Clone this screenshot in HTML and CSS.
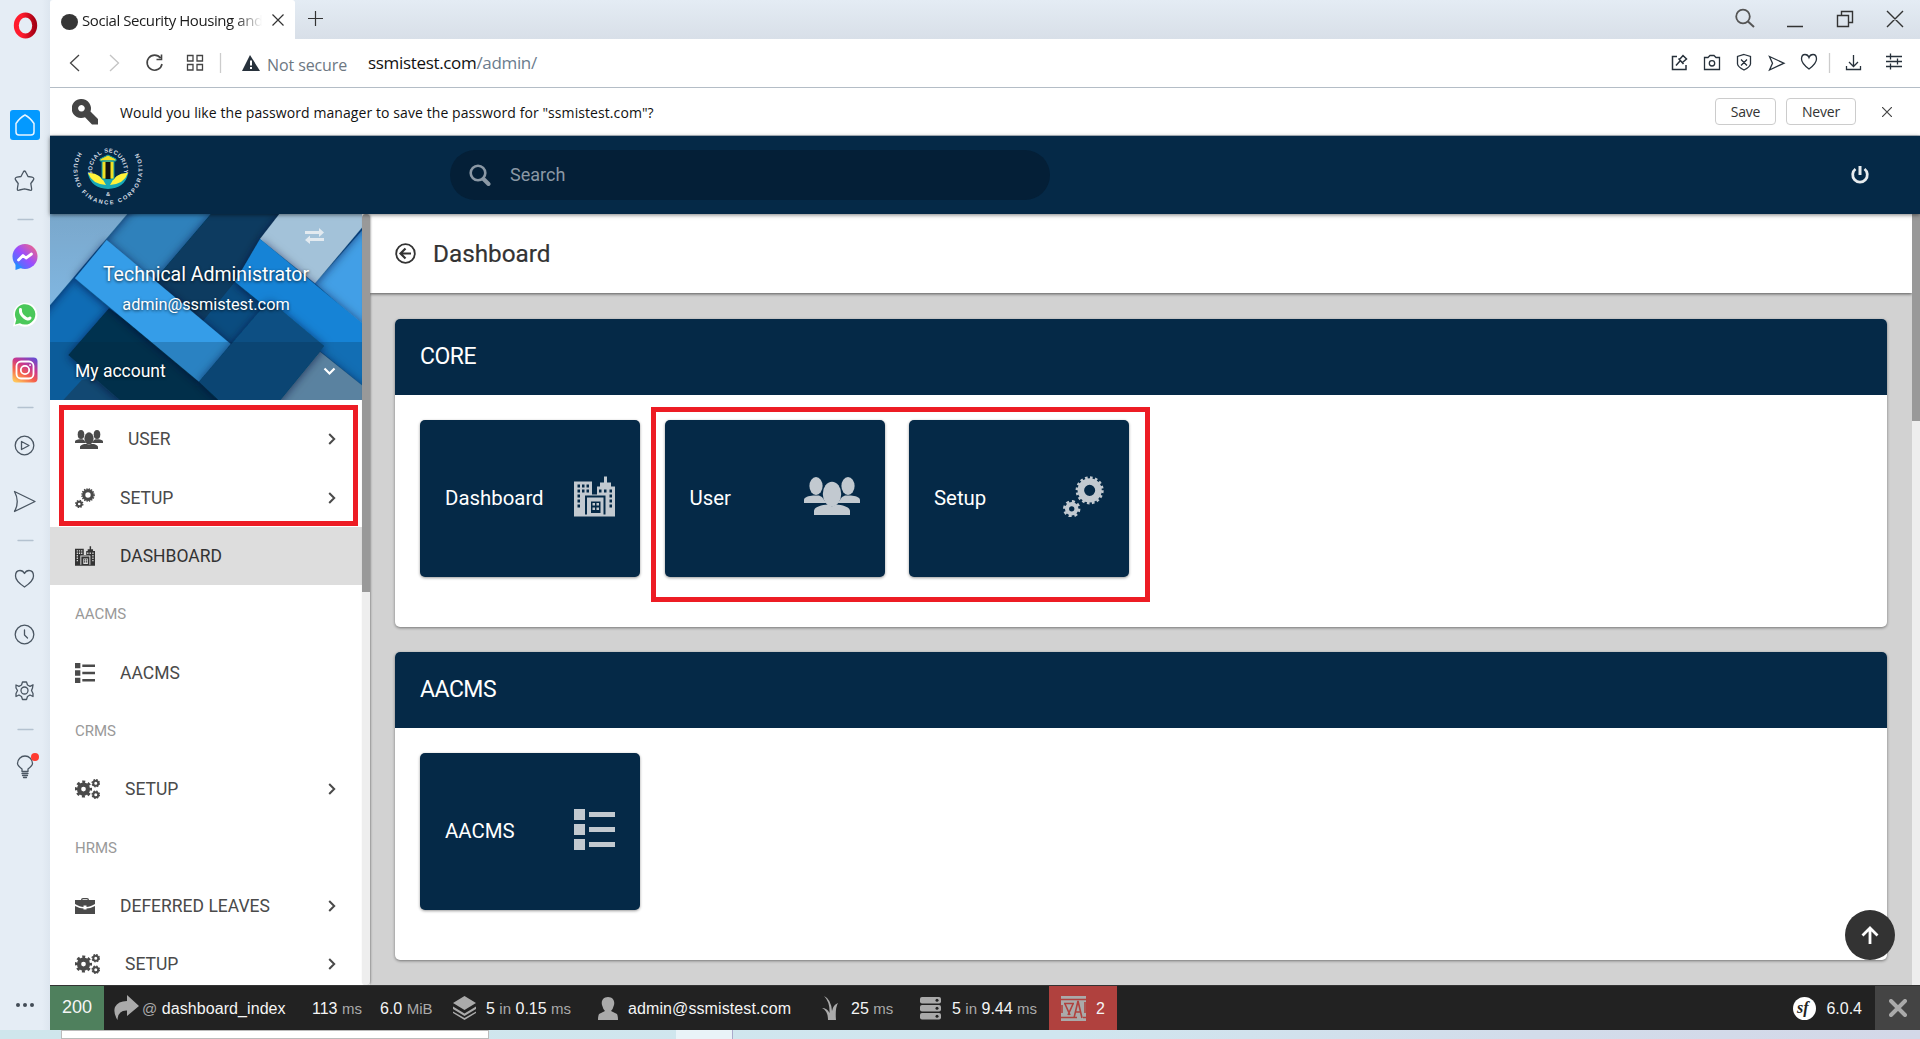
FILE: index.html
```html
<!DOCTYPE html>
<html lang="en">
<head>
<meta charset="utf-8">
<title>Social Security Housing and Finance Corporation</title>
<link rel="stylesheet" href="styles.css">
</head>
<body>
<svg class="defs" width="0" height="0">
  <defs>
    <symbol id="gears" viewBox="0 0 40 40">
      <circle cx="26" cy="14" r="8.6" fill="none" stroke="currentColor" stroke-width="6.4"/>
      <circle cx="26" cy="14" r="12.2" fill="none" stroke="currentColor" stroke-width="3" stroke-dasharray="2.5 2.29"/>
      <circle cx="8.5" cy="32" r="4.6" fill="none" stroke="currentColor" stroke-width="4"/>
      <circle cx="8.5" cy="32" r="7.2" fill="none" stroke="currentColor" stroke-width="2.6" stroke-dasharray="2.9 2.75"/>
    </symbol>
    <symbol id="cogs" viewBox="0 0 50 40">
      <circle cx="17" cy="20" r="9" fill="none" stroke="currentColor" stroke-width="8.5"/>
      <circle cx="17" cy="20" r="14.6" fill="none" stroke="currentColor" stroke-width="5" stroke-dasharray="6 5.47" stroke-dashoffset="3"/>
      <circle cx="41.5" cy="8.500" r="5" fill="none" stroke="currentColor" stroke-width="4"/>
      <circle cx="41.500" cy="8.500" r="7.300" fill="none" stroke="currentColor" stroke-width="2.600" stroke-dasharray="3.200 2.530"/>
      <circle cx="41.500" cy="31.500" r="5" fill="none" stroke="currentColor" stroke-width="4"/>
      <circle cx="41.500" cy="31.500" r="7.300" fill="none" stroke="currentColor" stroke-width="2.600" stroke-dasharray="3.200 2.530"/>
    </symbol>
    <symbol id="users" viewBox="0 0 56 38">
      <g fill="currentColor">
        <ellipse cx="12" cy="9" rx="6.600" ry="9"/><ellipse cx="44" cy="9" rx="6.600" ry="9"/>
        <path d="M0 26V23C0 20 5 19 9 18.500H15L18 20Q20 23 22 25.500V26ZM56 26V23C56 20 51 19 47 18.500H41L38 20Q36 23 34 25.500V26Z"/>
        <ellipse cx="28" cy="17" rx="9.200" ry="12.300"/>
        <path d="M10 38V34C10 30 17 28 24 27.500Q28 31 32 27.500C39 28 46 30 46 34V38Z"/>
      </g>
    </symbol>
    <symbol id="city" viewBox="0 0 41 40">
      <path fill="currentColor" fill-rule="evenodd" d="M0 5H18V18H23V10H26V6H30V0H33V6H37V10H41V40H0ZM3.500 8v3h2.500V8zM8 8v3h2.500V8zM12.500 8v3H15V8zM3.500 13v3h2.500v-3zM8 13v3h2.500v-3zM12.500 13v3H15v-3zM3.500 18v3h2.500v-3zM3.500 23v3h2.500v-3zM3.500 28v3h2.500v-3zM25 13v3h2.500v-3zM30 13v3h2.500v-3zM35.500 13v3H38v-3zM35.500 18v3H38v-3zM35.500 23v3H38v-3zM35.500 28v3H38v-3zM11 38V19H31.500V38H29.500V21H13V38ZM17 25v11.500h9.500V25z"/>
      <path fill="currentColor" d="M18.500 26.500h2.500v2.500h-2.500zM22.500 26.500H25v2.500h-2.500zM18.500 31h2.500v2.500h-2.500zM22.500 31H25v2.500h-2.500z"/>
    </symbol>
    <symbol id="list" viewBox="0 0 41 41">
      <path fill="currentColor" d="M0 0h11v11H0zM0 15h11v11H0zM0 30h11v11H0zM15 3h26v5H15zM15 18h26v5H15zM15 33h26v5H15z"/>
    </symbol>
    <symbol id="chev" viewBox="0 0 8 12"><path d="M1.200 1 6.200 6 1.200 11" fill="none" stroke="currentColor" stroke-width="2"/></symbol>
  </defs>
</svg>

<div class="screen">
  <aside class="rail">
    <svg width="50" height="1030" fill="none" stroke="#4a5662" stroke-width="1.300" stroke-linejoin="round" stroke-linecap="round">
      <defs>
        <linearGradient id="op" x1="0" x2="1"><stop offset="0.300" stop-color="#ff1b2d"/><stop offset="1" stop-color="#a70014"/></linearGradient>
        <linearGradient id="ms" x1="0" y1="1" x2="1" y2="0"><stop offset="0" stop-color="#1a8cff"/><stop offset="0.500" stop-color="#9a4dff"/><stop offset="1" stop-color="#ff6a70"/></linearGradient>
        <linearGradient id="ig" x1="0.200" y1="1" x2="0.800" y2="0"><stop offset="0" stop-color="#ffc65a"/><stop offset="0.350" stop-color="#f5604b"/><stop offset="0.650" stop-color="#c8378f"/><stop offset="1" stop-color="#6a4bd0"/></linearGradient>
      </defs>
      <ellipse cx="25.500" cy="25.500" rx="9.200" ry="10.500" stroke="url(#op)" stroke-width="5"/>
      <rect x="10" y="110" width="30" height="30" rx="3" fill="#0399ff" stroke="none"/>
      <path d="M16 123.500Q20 117.500 25 115 30 117.500 34 123.500V132Q34 135 31 135H19Q16 135 16 132Z" stroke="#e7f4ff" stroke-width="1.500"/>
      <path d="M22.800 173Q24.500 169 26.200 173L28 176.500 32 177.200Q35 178 33 180.500L30.800 183.500 31.600 188.500Q32 191 29.500 190L24.500 188.800 19.500 190Q17 191 17.400 188.500L18.200 183.500 16 180.500Q14 178 17 177.200L21 176.500Z"/>
      <path d="M18 219.500H33M18 407.500H33M18 540.500H33M18 729.500H33" stroke="#b4c2d0"/>
      <g stroke="none"><circle cx="25" cy="256.500" r="12.500" fill="url(#ms)"/><path d="M15.500 262v8l7-2.500z" fill="#268cff"/></g>
      <path d="M18.500 260 23 255.500l3 2.500 5.500-4" stroke="#fff" stroke-width="2.800"/>
      <g stroke="none"><path d="M13 326.500 14.500 320A12 12 0 1 1 19 325Z" fill="#fff"/><path d="M15 324.500 16.300 319.500A10.200 10.200 0 1 1 20 323.200Z" fill="#4ac85a"/></g>
      <path d="M20.500 309.500Q20 314 24 317 28 320.500 30 318" stroke="#fff" stroke-width="3"/>
      <rect x="12.500" y="357.500" width="25" height="25" rx="4" fill="url(#ig)" stroke="none"/>
      <g stroke="#fff" stroke-width="1.800"><rect x="16.500" y="361.500" width="17" height="17" rx="4.500"/><circle cx="25" cy="370" r="4.200"/><path d="M30 365.100h.1"/></g>
      <circle cx="24.500" cy="445.500" r="9.300"/><path d="M21.500 441.500V449.500L29 445.500Z"/>
      <path d="M14.500 491.500 35 501.500 14.500 511.500Q20 501.500 14.500 491.500Z"/>
      <path d="M24.500 587Q15.500 581 15.500 576 15.500 570.500 20 570.500 23 570.500 24.500 573.500 26 570.500 29 570.500 33.500 570.500 33.500 576 33.500 581 24.500 587Z"/>
      <circle cx="24.500" cy="634.500" r="9.300"/><path d="M24.500 630V635L27.500 638"/>
      <circle cx="24.500" cy="690.500" r="3.500"/>
      <path d="M22.500 682H26.500L27.500 685 30 686.300 33 684.800 32.500 688 31.500 690.500 33 693.500 33 696.500 30 695 27.500 696.500 26.500 699.500H22.500L21.500 696.500 19 695 16 696.500 16 693.500 17.500 690.500 16 688V685L19 686.300 21.500 685Z"/>
      <path d="M22 771.500V769Q17.500 765.500 17.500 763.500A7.500 7.500 0 1 1 32.500 763.500Q32.500 765.500 28 769V771.500ZM22 773.500H28M22.500 775.500H27.500M23.500 777.500H26.500"/>
      <circle cx="35" cy="757" r="4" fill="#ff3b30" stroke="none"/>
      <g fill="#434c56" stroke="none"><circle cx="18" cy="1005" r="2"/><circle cx="25" cy="1005" r="2"/><circle cx="32" cy="1005" r="2"/></g>
    </svg>
  </aside>

  <div class="window">
    <div class="tabs">
      <div class="tab">
        <span class="favicon"></span>
        <span class="tab-title">Social Security Housing and</span>
        <svg width="14" height="14" stroke="#333" stroke-width="1.200"><path d="M1.500 1.500 12.500 12.500M12.500 1.500 1.500 12.500"/></svg>
      </div>
      <svg class="plus" width="15" height="15" stroke="#333" stroke-width="1.200"><path d="M7.500 0V15M0 7.500H15"/></svg>
      <svg class="winctl" width="180" height="30" fill="none" stroke="#333" stroke-width="1.400">
        <circle cx="13" cy="16.500" r="6.800" stroke="#555" stroke-width="1.800"/><path d="M18 21.500 24 27" stroke="#555" stroke-width="2"/>
        <path d="M57 26.500H73M107.500 15.500H118.500V26.500H107.500ZM111.500 15V11.500H122.500V22.500H119M157 11 173 27M173 11 157 27"/>
      </svg>
    </div>

    <div class="address">
      <svg width="200" height="48" fill="none" stroke="#444" stroke-width="1.300">
        <path d="M29 16 20.500 24 29 32"/><path d="M60 16 68.500 24 60 32" stroke="#c4c4c4"/>
        <path d="M110.500 19A7.500 7.500 0 1 0 112 25M111.500 15.500V20.500H106.500" stroke-width="1.600"/>
        <path d="M137.500 16.500h5.500v5.500h-5.500zM147 16.500h5.500v5.500H147zM137.500 25.500h5.500v5.500h-5.500zM147 25.500h5.500v5.500H147z"/>
        <path d="M170.500 14V34" stroke="#ccc"/>
        <path d="M192 32 200 16V32Z" fill="#27313b" stroke="none"/>
      </svg>
      <svg class="warn" width="11" height="48"><path d="M0 16 10 32H0Z" fill="#27313b"/><path d="M1 21.500V26.500M1 28V30" stroke="#fff" stroke-width="2"/></svg>
      <span class="secure">Not secure</span>
      <span class="url">ssmistest.com<i>/admin/</i></span>
      <svg class="tools" width="236" height="48" fill="none" stroke="#27313b" stroke-width="1.300">
        <path d="M7 17.500H2.500V30.500H16V26M6 26.500 10 22M8.500 19.500 13.500 25M9.500 20.500 13 16.500 16.500 20 12.500 23.500" stroke-width="1.500"/>
        <path d="M34.500 18.500H38L40 16.500H44L46 18.500H49.500V30.500H34.500Z"/><circle cx="42" cy="24.300" r="2.700"/>
        <path d="M74 15.500 80.500 17.500V25Q80 28 74 31 68 28 67.500 25V17.500ZM71 20.500 77 26.500M77 20.500 71 26.500"/>
        <path d="M99.500 17.500 114 24.200 99.500 31 102.500 24.200Z"/>
        <path d="M139 30Q131.500 24.500 131.500 20 131.500 15.500 135 15.500 138 15.500 139 18.500 140 15.500 143 15.500 146.500 15.500 146.500 20 146.500 24.500 139 30Z"/>
        <path d="M159.500 14V34" stroke="#ccc"/>
        <path d="M183.500 16V27M179 23 183.500 27.500 188 23M176.500 27V30.500H190.500V27"/>
        <path d="M216 17.500H232M216 22.500H232M216 27.500H232M220.500 14.500V20.500M227.500 19.500V25.500M220.500 24.500V30.500"/>
      </svg>
    </div>

    <div class="password">
      <svg width="26" height="26" viewBox="0 0 26 26"><path fill="#444" fill-rule="evenodd" d="M9.500 0A9.500 9.500 0 1 0 13 18.200L20 25.500H26V20L18.500 12.500A9.500 9.500 0 0 0 9.500 0ZM9.500 6A3.300 3.300 0 1 1 9.400 6Z"/></svg>
      <span class="question">Would you like the password manager to save the password for "ssmistest.com"?</span>
      <button class="ask save">Save</button>
      <button class="ask never">Never</button>
      <svg class="dismiss" width="10" height="10" stroke="#444" stroke-width="1.200"><path d="M0 0 10 10M10 0 0 10"/></svg>
    </div>

    <header class="header">
      <svg class="logo" width="76" height="72" viewBox="-38 -34 76 72">
        <path id="arcIn" d="M-15.800 4A16 19.500 0 1 1 15.800 4" fill="none"/>
        <path id="arcOut" d="M-29.500 -19A34.500 34.500 0 1 0 29.500 -19" fill="none"/>
        <text class="seal"><textPath href="#arcIn" textLength="60">SOCIAL SECURITY</textPath></text>
        <text class="seal"><textPath href="#arcOut" textLength="144">HOUSING FINANCE CORPORATION</textPath></text>
        <path d="M-20 3Q-17 17 0 18 17 17 20 3 11 2 6 8H-6Q-11 2-20 3Z" fill="#18a9b8"/>
        <path d="M-20 2Q-8 1-2 14-16 13-20 2ZM20 2Q8 1 2 14 16 13 20 2Z" fill="#fff23a"/>
        <path d="M-8-12 0-16 8-12V-10H-8ZM-6-10H6V8H-6Z" fill="#f1df25" stroke="#0b98a5" stroke-width="1"/>
        <path d="M-2.500-9H2.500V8H-2.500Z" fill="#111"/>
        <text class="seal" x="-2" y="24.500">&amp;</text>
      </svg>
      <div class="search">
        <svg width="22" height="22" fill="none" stroke="#8b98a5"><circle cx="9" cy="9" r="7.300" stroke-width="2.600"/><path d="M14.500 15 19.500 20" stroke-width="4" stroke-linecap="round"/></svg>
        <span>Search</span>
      </div>
      <svg class="power" width="20" height="20" fill="none" stroke="#e8ecef"><path d="M5.500 4A7.300 7.300 0 1 0 14.500 4" stroke-width="2.800"/><path d="M10 1V10" stroke-width="3"/></svg>
    </header>

    <div class="body">
      <nav class="menu">
        <div class="profile">
          <svg class="art" viewBox="150 42 936 558" preserveAspectRatio="none">
            <defs>
              <filter id="sh" x="-20%" y="-20%" width="140%" height="140%"><feDropShadow dx="0" dy="4" stdDeviation="14" flood-color="#001830" flood-opacity="0.650"/></filter>
              <linearGradient id="lt" x1="0" x2="0" y1="0" y2="1"><stop offset="0" stop-color="#78a5c8"/><stop offset="1" stop-color="#82bae6"/></linearGradient>
            </defs>
            <path fill="#0f6cb5" d="M150 42H1086V600H150Z"/>
            <path fill="#2f81bb" d="M380 42H640L455 260 300 130Z"/>
            <path fill="#165382" d="M245 540 190 600H380L330 520Z"/>
            <path fill="#0a4b80" d="M705 245 830 300 692 450 590 370Z"/>
            <g filter="url(#sh)">
              <path fill="#073a60" d="M632 42H838L620 390 455 250Z"/>
              <path fill="url(#lt)" d="M100 0H417L150 315 100 380Z"/>
              <path fill="#04304f" d="M327 325 205 465 360 600H655L620 540Z"/>
            </g>
            <path fill="#0a4c80" d="M705 245 830 320 692 432 605 368Z"/>
            <path fill="#429fe6" d="M1150 20 945 250 1150 430Z" filter="url(#sh)"/>
            <path fill="#a3c2d9" d="M838 42H1120L945 250 780 117Z" filter="url(#sh)"/>
            <path fill="#1583d6" d="M780 117 1086 370V555L705 245Z" filter="url(#sh)"/>
            <path fill="#359de8" d="M320 120 225 235 597 545 692 432Z" filter="url(#sh)"/>
            <path fill="#739dbd" d="M960 455 1110 575V620H825Z" filter="url(#sh)"/>
            <path fill="#0a5083" d="M808 300 973 438 835 606H662L597 545Z" filter="url(#sh)"/>
            <path fill="rgba(5,35,60,.22)" d="M150 426H1086V600H150Z"/>
          </svg>
          <svg class="swap" width="20" height="16" fill="#e3eaf0"><path d="M0 3H14V0L19 4.500 14 9V6H0ZM19 10H5V7.500L0 12 5 16V13H19Z"/></svg>
          <div class="name">Technical Administrator</div>
          <div class="mail">admin@ssmistest.com</div>
          <div class="account"><span>My account</span><svg width="13" height="9"><path d="M1.500 1.500 6.500 6.500 11.500 1.500" fill="none" stroke="#fff" stroke-width="2.200"/></svg></div>
        </div>
        <ul class="items">
          <li><svg width="28" height="19"><use href="#users"/></svg><span>USER</span><svg class="chev"><use href="#chev"/></svg></li>
          <li><svg width="20" height="20"><use href="#gears"/></svg><span>SETUP</span><svg class="chev"><use href="#chev"/></svg></li>
          <li class="active"><svg width="20" height="20"><use href="#city"/></svg><span>DASHBOARD</span></li>
          <li class="group">AACMS</li>
          <li><svg width="20" height="20"><use href="#list"/></svg><span>AACMS</span></li>
          <li class="group">CRMS</li>
          <li><svg width="25" height="20"><use href="#cogs"/></svg><span>SETUP</span><svg class="chev"><use href="#chev"/></svg></li>
          <li class="group">HRMS</li>
          <li><svg width="20" height="16" fill="#4a4a4a"><path d="M6 2Q6 0 8 0H12Q14 0 14 2H20V6Q15 9 11.500 9V7.500H8.500V9Q5 9 0 6V2ZM7.500 2H12.500V1.300H7.500ZM0 8Q5 10.500 8.500 10.500V11.500H11.500V10.500Q15 10.500 20 8V16H0Z"/></svg><span>DEFERRED LEAVES</span><svg class="chev"><use href="#chev"/></svg></li>
          <li><svg width="25" height="20"><use href="#cogs"/></svg><span>SETUP</span><svg class="chev"><use href="#chev"/></svg></li>
        </ul>
        <div class="mark mark-menu"></div>
      </nav>
      <div class="bar menu-bar"></div>

      <main class="main">
        <div class="title">
          <svg width="21" height="21" fill="none" stroke="#333"><circle cx="10.500" cy="10.500" r="9.300" stroke-width="1.800"/><path d="M16 10.500H6M10.500 5.500 5.500 10.500 10.500 15.500" stroke-width="2.200"/></svg>
          <h1>Dashboard</h1>
        </div>
        <div class="panels">
          <section class="panel">
            <h2>CORE</h2>
            <div class="tiles">
              <div class="tile"><span>Dashboard</span><svg width="41" height="41"><use href="#city"/></svg></div>
              <div class="tile"><span>User</span><svg width="56" height="38"><use href="#users"/></svg></div>
              <div class="tile"><span>Setup</span><svg width="41" height="41"><use href="#gears"/></svg></div>
              <div class="mark mark-tiles"></div>
            </div>
          </section>
          <section class="panel">
            <h2>AACMS</h2>
            <div class="tiles">
              <div class="tile"><span>AACMS</span><svg width="41" height="41"><use href="#list"/></svg></div>
            </div>
          </section>
        </div>
        <div class="totop"><svg width="18" height="19" fill="none" stroke="#fff" stroke-width="2.800"><path d="M9 18V2.500M1.500 9.500 9 2 16.500 9.500"/></svg></div>
      </main>
      <div class="bar page-bar"></div>
    </div>

    <footer class="debug">
      <div class="status">200</div>
      <div class="cell c-route"><svg width="26" height="26" fill="#aaa"><path d="M14 0 26 11 14 21V15.500Q5 15 4.500 25 0 18 2 12 5 6 14 6Z"/></svg><span><i>@</i> dashboard_index</span></div>
      <div class="cell c-time"><span>113 <i>ms</i></span></div>
      <div class="cell c-mem"><span>6.0 <i>MiB</i></span></div>
      <div class="cell c-cache"><svg width="23" height="24" fill="#aaa"><path d="M11.500 0 23 7 11.500 14 0 7ZM0 10.500 11.500 17.500 23 10.500V13L11.500 20 0 13ZM0 15.500 11.500 22 23 15.500V17L11.500 24 0 17Z"/></svg><span>5 <i>in</i> 0.15 <i>ms</i></span></div>
      <div class="cell c-user"><svg width="20" height="23" fill="#aaa"><path d="M10 0C15 0 17 4 16 8Q15 12 13 14L19 17Q20 19 20 23H0Q0 19 1 17L7 14Q5 12 4 8C3 4 5 0 10 0Z"/></svg><span>admin@ssmistest.com</span></div>
      <div class="cell c-twig"><svg width="18" height="24" fill="#aaa"><path d="M3 0Q10 3 11 15 12 9 17 7 14 12 15 24H7Q7 15 1 12 6 12 8.500 17 9 6 3 0Z"/></svg><span>25 <i>ms</i></span></div>
      <div class="cell c-db"><svg width="21" height="23"><g fill="#aaa"><rect width="21" height="6.500" rx="2"/><rect y="8" width="21" height="6.500" rx="2"/><rect y="16" width="21" height="6.500" rx="2"/></g><g fill="#222"><circle cx="17" cy="3.200" r="1.500"/><circle cx="17" cy="11.200" r="1.500"/><circle cx="17" cy="19.200" r="1.500"/></g></svg><span>5 <i>in</i> 9.44 <i>ms</i></span></div>
      <div class="cell c-lang"><svg width="25" height="25"><path fill="#aaa" d="M0 0H25V25H0Z"/><path d="M0 3.500H25M0 21.500H16M22 21.500H25M3 7.500H13M4 8 9 19M12 8 7 19M13 22 17 5 21 22M14 16H20M1 9V17M24 6V17" stroke="#b0413e" stroke-width="1.600" fill="none"/></svg><span>2</span></div>
      <div class="cell c-sf"><svg width="23" height="23"><circle cx="11.500" cy="11.500" r="11.500" fill="#fff"/><text class="sf" x="4" y="16">sf</text></svg><span>6.0.4</span></div>
      <div class="close"><svg width="18" height="18"><path d="M2 2 16 16M16 2 2 16" stroke="#aaa" stroke-width="4" stroke-linecap="round"/></svg></div>
    </footer>
  </div>
  <div class="taskbar"><span class="task-search"></span><span class="task-active"></span><span class="task-clock">6:06 PM</span></div>
</div>
</body>
</html>
```
FILE: styles.css
```css
* { box-sizing: border-box; }
body { margin: 0; font-family: Roboto, sans-serif; }
.defs { position: absolute; }
i { font-style: normal; }
.screen { display: grid; grid-template: 1030px 9px / 50px 1870px; width: 1920px; height: 1039px; overflow: hidden; }
.rail { background: linear-gradient(90deg, #e5edf5 84%, #dde6ef); }
.rail svg { display: block; }
.window { display: flex; flex-direction: column; min-width: 0; }

.tabs { height: 39px; flex: none; display: flex; background: linear-gradient(#e4ecf4, #d8dfe8); }
.tab { width: 245px; height: 39px; display: flex; align-items: center; padding: 1px 11px 0 11px; background: #fff; border-radius: 3px 3px 0 0; }
.favicon { width: 17px; height: 16px; margin-top: 3px; border-radius: 50%; background: #363636; flex: none; }
.tab-title { width: 180px; margin-left: 4px; margin-right: 9px; flex: none; overflow: hidden; white-space: nowrap; font: 15px/20px "Open Sans", sans-serif; letter-spacing: -0.42px; color: #1c1c1c; -webkit-mask-image: linear-gradient(90deg, #000 85%, transparent); }
.tab > svg { flex: none; }
.plus { margin: 11px 0 0 13px; }
.winctl { margin: 0 10px 0 auto; }

.address { height: 49px; flex: none; display: flex; background: #fff; border-bottom: 1px solid #b4bdc6; font: 16px/48px "Open Sans", sans-serif; }
.address svg { flex: none; }
.secure { width: 101px; margin-left: 6px; color: #6d7782; line-height: 52px; letter-spacing: -0.1px; white-space: nowrap; }
.url { font-size: 17px; letter-spacing: -0.33px; color: #111; }
.url i { color: #6b7c8e; }
.tools { margin: 0 14px 0 auto; }

.password { height: 48px; flex: none; display: flex; align-items: center; padding: 0 28px 0 22px; background: #fff; border-bottom: 1px solid #b4bdc6; font: 14px "Open Sans", sans-serif; color: #111; }
.question { margin-left: 22px; margin-top: 1px; letter-spacing: 0.08px; white-space: nowrap; }
.ask { height: 27px; padding: 0; border: 1px solid #ccc; border-radius: 4px; background: #fff; font: 14px "Open Sans", sans-serif; letter-spacing: -0.2px; color: #333; }
.save { width: 61px; margin-left: auto; }
.never { width: 70px; margin: 0 26px 0 10px; }

.header { height: 78px; flex: none; display: flex; align-items: center; background: #052947; box-shadow: 0 1px 4px rgba(0,0,0,.5); position: relative; z-index: 2; }
.logo { margin: 0 0 4px 20px; overflow: visible; }
.seal { font: bold 5.800px "Liberation Sans", sans-serif; fill: #d5dde4; }
.search { width: 600px; height: 50px; margin-left: 304px; padding: 0 0 1px 19px; display: flex; align-items: center; gap: 19px; border-radius: 25px; background: #041f37; font-size: 18px; color: #8b98a5; }
.power { margin: 0 50px 0 auto; }

.body { height: 771px; flex: none; display: flex; }
.menu { position: relative; width: 312px; height: 771px; flex: none; overflow: hidden; background: #fff; }
.bar { width: 8px; flex: none; position: relative; z-index: 1; }
.menu-bar { background: linear-gradient(#999, #999) 0 0 / 8px 378px no-repeat, #eee; border-radius: 4px; box-shadow: 1px 0 2px rgba(0,0,0,.3); }
.page-bar { background: linear-gradient(#999, #999) 0 0 / 8px 207px no-repeat, #eee; }
.profile { position: relative; height: 186px; color: #fff; text-align: center; text-shadow: 0 1px 3px rgba(0,0,0,.7); }
.art { position: absolute; inset: 0; width: 312px; height: 186px; }
.swap { position: absolute; left: 255px; top: 14px; }
.name { position: relative; padding-top: 49px; font-size: 19.500px; line-height: 24px; }
.mail { position: relative; padding-top: 7px; font-size: 16.300px; line-height: 22px; }
.account { position: relative; margin-top: 26px; height: 58px; padding: 0 26px 0 25px; display: flex; align-items: center; justify-content: space-between; font-size: 17.500px; }
.items { list-style: none; margin: 0; padding: 10px 0 0; }
.items li { height: 58.350px; padding: 0 26px 0 25px; display: flex; align-items: center; font-size: 17.500px; color: #4a4a4a; }
.items span { margin-left: 25px; }
.items li.active { background: #ddd; color: #333; }
.items li.group { font-size: 15px; color: #999; }
.chev { width: 8px; height: 12px; margin-left: auto; }
.mark { position: absolute; border: 5px solid #ed1c24; z-index: 1; }
.mark-menu { left: 9px; top: 191px; width: 299px; height: 121px; }

.main { position: relative; flex: 1; min-width: 0; background: #d2d2d2; overflow: hidden; }
.title { height: 79px; padding-left: 25px; display: flex; align-items: center; gap: 17px; background: #fff; box-shadow: 0 1px 3px rgba(0,0,0,.6); }
.title h1 { margin: 0; font-size: 24.300px; font-weight: 400; color: #333; -webkit-text-stroke: 0.2px #333; }
.panels { padding: 26px 25px 0; display: grid; gap: 25px; }
.panel { height: 308px; background: #fff; border-radius: 5px; box-shadow: 0 1px 3px rgba(0,0,0,.45); }
.panel h2 { margin: 0; height: 76px; padding: 0 25px; border-radius: 5px 5px 0 0; background: #052947; color: #fff; font-size: 23px; font-weight: 400; line-height: 75px; letter-spacing: -0.5px; }
.tiles { position: relative; display: flex; gap: 24.500px; padding: 25px; }
.tile { width: 220px; height: 156.500px; padding: 0 25px; display: flex; align-items: center; justify-content: space-between; border-radius: 5px; background: #052947; color: #fff; font-size: 20.400px; box-shadow: 0 1px 3px rgba(0,0,0,.4); }
.tile svg { color: #c2c9d0; margin-bottom: 4px; }
.mark-tiles { left: 256px; top: 12px; width: 499px; height: 195px; }
.totop { position: absolute; left: 1475px; top: 696px; width: 50px; height: 50px; display: grid; place-items: center; border-radius: 50%; background: #333; }

.debug { height: 45px; flex: none; display: flex; background: #222; font: 16px/43px "Liberation Sans", sans-serif; color: #f5f5f5; border-top: 1px solid #333; white-space: nowrap; position: relative; z-index: 2; }
.debug i { color: #aaa; font-size: 15px; }
.debug > div { flex: none; }
.status { width: 54px; text-align: center; background: #4f805d; font-size: 18px; }
.cell { display: flex; align-items: center; gap: 10px; }
.c-route { width: 208px; padding-left: 9px; gap: 3px; letter-spacing: 0.07px; }
.c-time { width: 68px; }
.c-mem { width: 73px; }
.c-cache { width: 145px; }
.c-user { width: 223px; gap: 10px; letter-spacing: 0.1px; }
.c-twig { width: 99px; gap: 12px; }
.c-db { width: 129px; gap: 11px; }
.c-lang { width: 68px; padding-left: 12px; background: #b0413e; }
.c-sf { margin-left: auto; margin-right: 13px; }
.sf { font: italic bold 16px "Liberation Serif", serif; fill: #222; }
.close { width: 45px; display: grid; place-items: center; background: #444; }

.taskbar { grid-column: 1 / 3; display: flex; overflow: hidden; background: linear-gradient(90deg, #cfe6ec, #d0e6ef 55%, #d2dcea 80%, #d3d8e8); font: 15px/20px "Open Sans", sans-serif; }
.task-search { width: 428px; margin-left: 61px; border: 1px solid #bbb; background: #fff; }
.task-active { width: 57px; margin-left: 187px; background: #e9f3f8; border-right: 1px solid #aac; }
.task-clock { margin: 3px 80px 0 auto; color: #111; }
```
